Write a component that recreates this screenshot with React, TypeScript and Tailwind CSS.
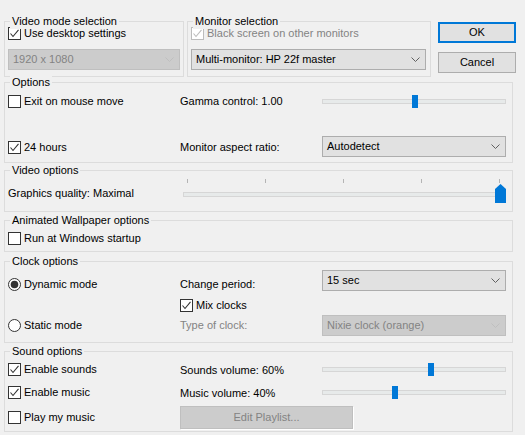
import React from 'react';

// Windows-style settings dialog

const Box: React.FC<{ checked?: boolean; disabled?: boolean }> = ({ checked, disabled }) => {
  const c = disabled ? '#bcbcbc' : '#333333';
  return (
    <svg width="13" height="13" viewBox="0 0 13 13" className="shrink-0">
      <rect x="0.5" y="0.5" width="12" height="12" fill="#ffffff" stroke={c} />
      {checked && <polyline points="2.5,6.5 5,9.5 10.5,2.8" fill="none" stroke={disabled ? '#bcbcbc' : '#333333'} strokeWidth="1.1" />}
    </svg>
  );
};

const Check: React.FC<{ label: string; checked?: boolean; disabled?: boolean }> = ({ label, checked, disabled }) => (
  <div className="flex items-center gap-[3px] h-[15px]">
    <Box checked={checked} disabled={disabled} />
    <span className={disabled ? 'text-[#838383]' : ''}>{label}</span>
  </div>
);

const Radio: React.FC<{ label: string; checked?: boolean }> = ({ label, checked }) => (
  <div className="flex items-center gap-[3px] h-[15px]">
    <svg width="13" height="13" viewBox="0 0 13 13" className="shrink-0">
      <circle cx="6.5" cy="6.5" r="6" fill="#ffffff" stroke="#333333" />
      {checked && <circle cx="6.5" cy="6.5" r="3.8" fill="#333333" />}
    </svg>
    <span>{label}</span>
  </div>
);

const Combo: React.FC<{ value: string; disabled?: boolean; className?: string }> = ({ value, disabled, className }) => (
  <div
    className={`h-[21px] border flex items-center justify-between pl-[4px] pr-[5px] ${
      disabled ? 'bg-[#cccccc] border-[#bfbfbf] text-[#838383]' : 'bg-[#e1e1e1] border-[#adadad]'
    } ${className ?? ''}`}
  >
    <span>{value}</span>
    <svg width="9" height="5" viewBox="0 0 9 5">
      <polyline points="0.5,0.5 4.5,4.5 8.5,0.5" fill="none" stroke={disabled ? '#bfbfbf' : '#606060'} />
    </svg>
  </div>
);

const Slider: React.FC<{ pos: number }> = ({ pos }) => (
  <div className="relative w-[184px] h-[13px]">
    <div className="absolute left-0 right-0 top-[4px] h-[5px] border border-[#d6d6d6] bg-[#e7eaea]" />
    <div className="absolute top-0 w-[6px] h-[13px] bg-[#0078d7]" style={{ left: pos }} />
  </div>
);

const QualitySlider: React.FC = () => {
  const ticks = [4, 82, 160, 238, 316];
  return (
    <div className="relative w-[323px] h-[24px]">
      {ticks.map((t) => (
        <div key={t} className="absolute top-0 w-px h-[4px] bg-[#b4b4b4]" style={{ left: t }} />
      ))}
      <div className="absolute left-0 right-0 top-[13px] h-[5px] border border-[#d6d6d6] bg-[#e7eaea]" />
      <svg className="absolute left-[312px] top-[5px]" width="11" height="19" viewBox="0 0 11 19">
        <polygon points="0,5 5.5,0 11,5 11,19 0,19" fill="#0078d7" />
      </svg>
    </div>
  );
};

const Group: React.FC<{ title: string; className: string; children?: React.ReactNode }> = ({ title, className, children }) => (
  <div className={`border border-[#dcdcdc] pl-[3px] ${className}`}>
    <div className="-mt-[8px] -mb-[7px] ml-[5px] -translate-x-[3px] h-[15px] leading-[15px] w-fit px-[2px] bg-[#f0f0f0]">
      {title}
    </div>
    {children}
  </div>
);

export default function App() {
  return (
    <div className="w-[525px] h-[435px] bg-[#f0f0f0] pt-[21px] pl-[4px] text-[11px] leading-[15px] text-black font-['Liberation_Sans',Arial,sans-serif] overflow-hidden">
      <div className="flex">
        <Group title="Video mode selection" className="w-[180px] h-[56px] pr-[3px]">
          <div className="mt-[4px]">
            <Check label="Use desktop settings" checked />
          </div>
          <Combo value="1920 x 1080" disabled className="mt-[8px]" />
        </Group>
        <Group title="Monitor selection" className="ml-[3px] w-[244px] h-[56px] pr-[4px]">
          <div className="mt-[4px]">
            <Check label="Black screen on other monitors" checked disabled />
          </div>
          <Combo value="Multi-monitor: HP 22f master" className="mt-[8px]" />
        </Group>
        <div className="ml-[7px] pt-[1px] flex flex-col gap-[9px]">
          <div className="w-[78px] h-[21px] border-2 border-[#0078d7] bg-[#e1e1e1] flex items-center justify-center">OK</div>
          <div className="w-[78px] h-[21px] border border-[#adadad] bg-[#e1e1e1] flex items-center justify-center">Cancel</div>
        </div>
      </div>

      <Group title="Options" className="mt-[5px] w-[509px] h-[81px] pr-[6px]">
        <div className="mt-[11px] h-[15px] flex items-center">
          <div className="w-[172px]"><Check label="Exit on mouse move" /></div>
          <div className="w-[142px]">Gamma control: 1.00</div>
          <Slider pos={90} />
        </div>
        <div className="mt-[27px] h-[21px] flex items-center">
          <div className="w-[172px] mt-[2px]"><Check label="24 hours" checked /></div>
          <div className="w-[142px] mt-[1px]">Monitor aspect ratio:</div>
          <Combo value="Autodetect" className="w-[184px]" />
        </div>
      </Group>

      <Group title="Video options" className="mt-[7px] w-[509px] h-[42px] pr-[6px]">
        <div className="mt-[8px] flex items-start">
          <div className="w-[175px] mt-[7px]">Graphics quality: Maximal</div>
          <QualitySlider />
        </div>
      </Group>

      <Group title="Animated Wallpaper options" className="mt-[8px] w-[509px] h-[32px] pr-[6px]">
        <div className="mt-[10px]">
          <Check label="Run at Windows startup" />
        </div>
      </Group>

      <Group title="Clock options" className="mt-[9px] w-[509px] h-[82px] pr-[6px]">
        <div className="mt-[8px] h-[21px] flex items-start">
          <div className="w-[172px] mt-[7px]"><Radio label="Dynamic mode" checked /></div>
          <div className="w-[142px] mt-[7px]">Change period:</div>
          <Combo value="15 sec" className="w-[184px]" />
        </div>
        <div className="mt-[7px] h-[15px] flex items-center">
          <div className="w-[172px]" />
          <Check label="Mix clocks" checked />
        </div>
        <div className="mt-[2px] h-[21px] flex items-center">
          <div className="w-[172px]"><Radio label="Static mode" /></div>
          <div className="w-[142px] text-[#838383]">Type of clock:</div>
          <Combo value="Nixie clock (orange)" disabled className="w-[184px]" />
        </div>
      </Group>

      <Group title="Sound options" className="mt-[8px] w-[509px] h-[81px] pr-[6px]">
        <div className="mt-[10px] h-[15px] flex items-center">
          <div className="w-[172px]"><Check label="Enable sounds" checked /></div>
          <div className="w-[142px] mt-[2px]">Sounds volume: 60%</div>
          <Slider pos={106} />
        </div>
        <div className="mt-[8px] h-[15px] flex items-center">
          <div className="w-[172px]"><Check label="Enable music" checked /></div>
          <div className="w-[142px] mt-[1px]">Music volume: 40%</div>
          <Slider pos={70} />
        </div>
        <div className="mt-[6px] h-[23px] flex items-center">
          <div className="w-[172px]"><Check label="Play my music" /></div>
          <div className="w-[173px] h-[23px] border border-[#bfbfbf] bg-[#cccccc] shadow-[1px_1px_0_#ffffff] text-[#838383] flex items-center justify-center">
            Edit Playlist...
          </div>
        </div>
      </Group>
    </div>
  );
}
